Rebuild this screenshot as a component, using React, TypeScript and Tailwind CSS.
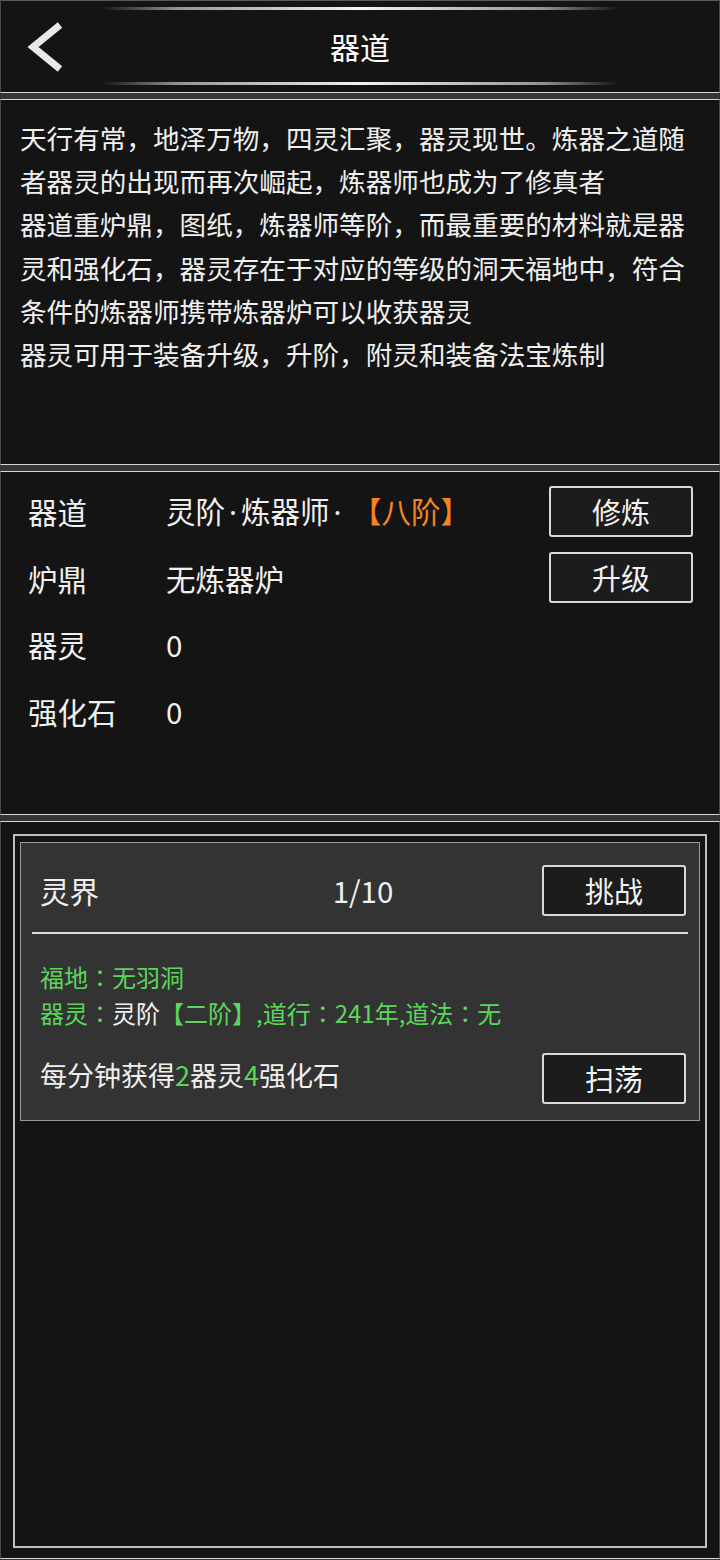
import React from 'react';

const FONT = { fontFamily: '"Noto Sans CJK SC", "Noto Sans", sans-serif' };

const intro = [
  '天行有常，地泽万物，四灵汇聚，器灵现世。炼器之道随',
  '者器灵的出现而再次崛起，炼器师也成为了修真者',
  '器道重炉鼎，图纸，炼器师等阶，而最重要的材料就是器',
  '灵和强化石，器灵存在于对应的等级的洞天福地中，符合',
  '条件的炼器师携带炼器炉可以收获器灵',
  '器灵可用于装备升级，升阶，附灵和装备法宝炼制',
];

// narrow middle dot and centred full-width colon, as in the game font
const Dot = () => <span className="mx-[4px] font-['Noto_Sans',sans-serif]">·</span>;
const Colon = () => <span className="font-['Noto_Sans_CJK_JP',sans-serif]">：</span>;

function GlowLine() {
  return (
    <div className="h-[3px] w-full rounded-full bg-[linear-gradient(90deg,rgba(255,255,255,0),rgba(255,255,255,0.55)_15%,#f4f4f4_50%,rgba(255,255,255,0.55)_85%,rgba(255,255,255,0))]" />
  );
}

function OutlineButton({ label, className = '' }: { label: string; className?: string }) {
  return (
    <button
      className={`flex h-[51px] w-[144px] items-center justify-center rounded-[3px] border-2 border-[#d9d9d9] bg-[#1c1c1c] text-[29px] text-[#f2f2f2] ${className}`}
    >
      {label}
    </button>
  );
}

function StatRow({ label, children, action }: { label: string; children: React.ReactNode; action?: string }) {
  return (
    <div className="flex h-[66.5px] items-center">
      <span className="w-[138px] text-[29.5px] text-[#f0f0f0]">{label}</span>
      <span className="flex-1 whitespace-pre text-[29.5px] text-[#f0f0f0]">{children}</span>
      {action && <OutlineButton label={action} />}
    </div>
  );
}

export default function App() {
  return (
    <div className="flex h-[1560px] w-full flex-col gap-[6px] bg-[#363636] text-[#f0f0f0]" style={FONT}>
      {/* Header */}
      <header className="grid h-[93px] grid-cols-[100px_1fr_100px] border-x border-t border-b border-x-[#4a4a4a] border-t-[#5a5a5a] border-b-[#d6d6d6] bg-[#141414]">
        <div className="flex items-start">
          <svg width="100" height="91" viewBox="0 0 100 91" fill="none">
            <polyline points="59,24 32,46 59,68" stroke="#e8e8e8" strokeWidth="7" strokeLinejoin="miter" />
          </svg>
        </div>
        <div className="flex flex-col items-center justify-between pb-[7px] pt-[6px]">
          <GlowLine />
          <h1 className="text-[30px] leading-none text-white">器道</h1>
          <GlowLine />
        </div>
        <div />
      </header>

      {/* Intro text */}
      <section className="h-[366px] border-y border-x border-x-[#4a4a4a] border-y-[#d6d6d6] bg-[#141414] px-[19px] pt-[16px]">
        {intro.map((line, i) => (
          <div key={i} className="whitespace-nowrap text-[26.6px] leading-[43.2px] text-[#f0f0f0]">
            {line}
          </div>
        ))}
      </section>

      {/* Stats */}
      <section className="h-[344px] border-y border-x border-x-[#4a4a4a] border-y-[#d6d6d6] bg-[#141414] pl-[27px] pr-[26px] pt-[6px]">
        <StatRow label="器道" action="修炼">
          灵阶<Dot />炼器师<Dot />{' '}
          <span className="text-[#f5841f]">【八阶】</span>
        </StatRow>
        <StatRow label="炉鼎" action="升级">
          无炼器炉
        </StatRow>
        <StatRow label="器灵">0</StatRow>
        <StatRow label="强化石">0</StatRow>
      </section>

      {/* Realm list */}
      <section className="flex h-[738px] flex-col border-y border-x border-x-[#4a4a4a] border-y-[#d6d6d6] bg-[#141414] px-[12px] pb-[10px] pt-[12px]">
        <div className="flex flex-1 flex-col border-2 border-[#bdbdbd] px-[5px] pt-[6px]">
          <div className="border border-[#9a9a9a] bg-[#333333] pb-[16px]">
            <div className="flex items-center pl-[19px] pr-[13px] pt-[22px]">
              <span className="flex-1 basis-0 text-[29.5px]">灵界</span>
              <span className="text-[29.5px]">1/10</span>
              <div className="flex flex-1 basis-0 justify-end">
                <OutlineButton label="挑战" className="h-[50px] w-[143px]" />
              </div>
            </div>
            <div className="mx-[11px] mt-[16px] h-[2px] bg-[#dcdcdc]" />
            <div className="mt-[25px] pl-[19px] text-[24px] leading-[36px] text-[#5bd65b]">
              <div>
                福地<Colon />无羽洞
              </div>
              <div>
                器灵<Colon />
                <span className="text-[#f0f0f0]">灵阶</span>【二阶】,道行<Colon />241年,道法<Colon />无
              </div>
            </div>
            <div className="mt-[22px] flex items-center pl-[19px] pr-[13px]">
              <span className="mb-[6px] flex-1 text-[27px]">
                每分钟获得<span className="text-[#5bd65b]">2</span>器灵<span className="text-[#5bd65b]">4</span>强化石
              </span>
              <OutlineButton label="扫荡" className="h-[50px] w-[143px]" />
            </div>
          </div>
        </div>
      </section>
    </div>
  );
}
